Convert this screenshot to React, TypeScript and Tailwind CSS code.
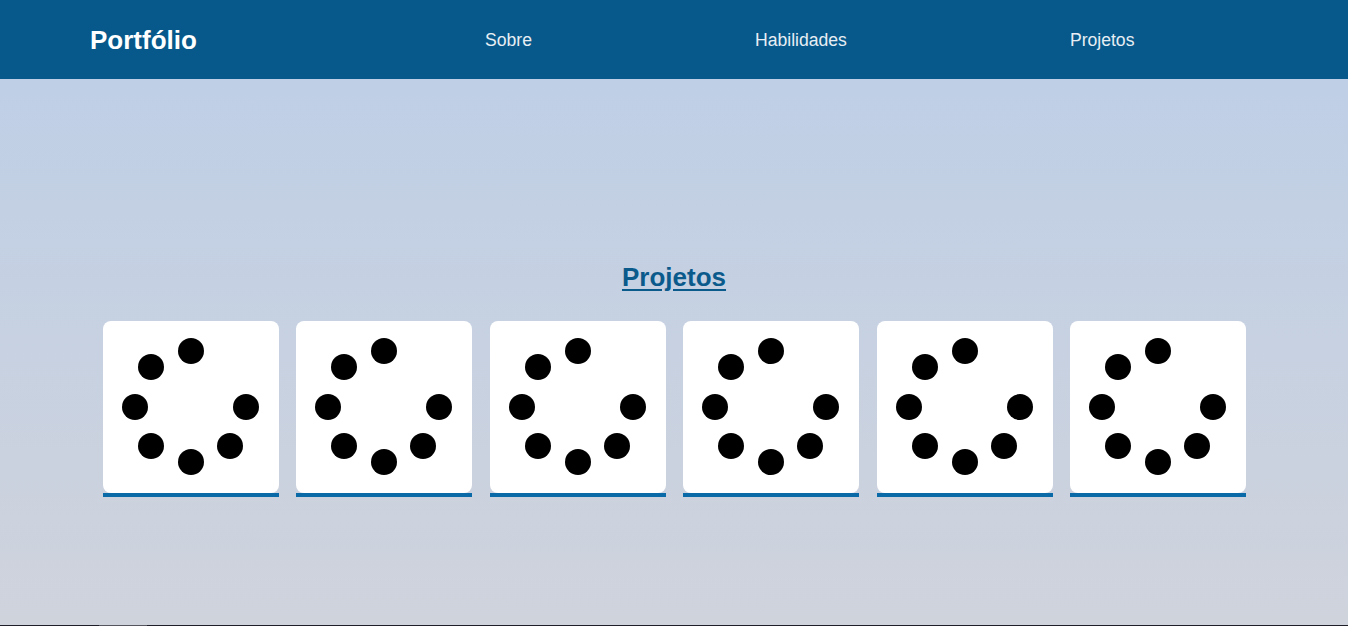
import React from 'react';

const dots = [
  { x: 0, y: -56 },
  { x: -40, y: -40 },
  { x: -56, y: 0 },
  { x: -40, y: 39 },
  { x: 0, y: 55 },
  { x: 39, y: 39 },
  { x: 55, y: 0 },
];

const Spinner: React.FC = () => (
  <svg width="140" height="140" viewBox="-70 -70 140 140">
    {dots.map((d, i) => (
      <circle key={i} cx={d.x} cy={d.y} r="13" fill="#000" />
    ))}
  </svg>
);

const App: React.FC = () => {
  return (
    <div className="w-full h-[626px] flex flex-col overflow-hidden" style={{ fontFamily: '"Liberation Sans", Arial, sans-serif' }}>
      <header className="h-[79px] shrink-0 bg-[#06598a] flex items-center pl-[90px] pt-[2px]">
        <h1 className="w-[395px] text-[26px] font-bold text-white">Portfólio</h1>
        <nav className="flex gap-[223px] text-[17.6px] text-[#e8eef4]">
          <a href="#sobre">Sobre</a>
          <a href="#habilidades">Habilidades</a>
          <a href="#projetos">Projetos</a>
        </nav>
      </header>

      <main className="flex-1 bg-gradient-to-b from-[#bfcfe6] to-[#cfd3dc] flex flex-col items-center pt-[183px]">
        <h2 className="text-[26px] leading-[30px] font-bold text-[#0b5a8c] underline underline-offset-[3px] mb-[29px]">
          Projetos
        </h2>
        <div className="flex gap-[17.4px] pl-px">
          {Array.from({ length: 6 }).map((_, i) => (
            <div key={i} className="w-[176px] flex flex-col">
              <div className="h-[172px] bg-white rounded-lg flex items-center justify-center">
                <Spinner />
              </div>
              <div className="h-[4px] bg-[#0a6aa8]" />
            </div>
          ))}
        </div>
      </main>

      <div className="h-px shrink-0 bg-[#1e1e28] flex">
        <div className="ml-[99px] w-[48px] bg-[#55555e]" />
      </div>
    </div>
  );
};

export default App;
